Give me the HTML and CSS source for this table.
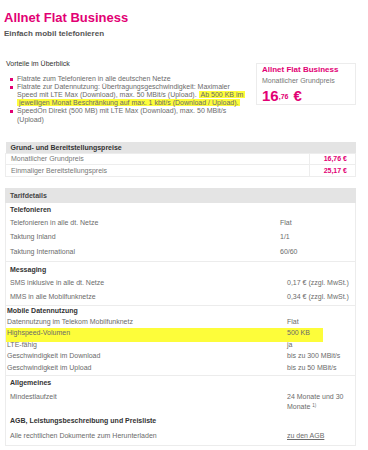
FILE: index.html
```html
<!DOCTYPE html>
<html lang="de">
<head>
<meta charset="utf-8">
<title>Allnet Flat Business</title>
<link rel="stylesheet" href="styles.css">
</head>
<body>
<div class="page">
  <h1 class="title">Allnet Flat Business</h1>
  <h2 class="subtitle">Einfach mobil telefonieren</h2>

  <div class="overview">
    <div class="benefits">
      <div class="benefits-title">Vorteile im Überblick</div>
      <ul class="benefit-list">
        <li><span>Flatrate zum Telefonieren in alle deutschen Netze</span></li>
        <li><span>Flatrate zur Datennutzung: Übertragungsgeschwindigkeit: Maximaler Speed mit LTE Max (Download), max. 50 MBit/s (Upload). <mark class="marker">Ab 500 KB im jeweiligen Monat Beschränkung auf max. 1 kbit/s (Download / Upload).</mark></span></li>
        <li><span>SpeedOn Direkt (500 MB) mit LTE Max (Download), max. 50 MBit/s (Upload)</span></li>
      </ul>
    </div>
    <div class="price-box">
      <div class="price-name">Allnet Flat Business</div>
      <div class="price-label">Monatlicher Grundpreis</div>
      <div class="price-value"><span class="big">16</span><span class="cents">,76</span><span class="big euro">€</span></div>
    </div>
  </div>

  <table class="price-table">
    <thead>
      <tr><th colspan="2">Grund- und Bereitstellungspreise</th></tr>
    </thead>
    <tbody>
      <tr><td>Monatlicher Grundpreis</td><td class="amount">16,76 €</td></tr>
      <tr><td>Einmaliger Bereitstellungspreis</td><td class="amount">25,17 €</td></tr>
    </tbody>
  </table>

  <div class="tarif">
    <div class="tarif-head">Tarifdetails</div>
    <div class="tarif-body">
      <section class="sec sec-tel">
        <div class="sec-title">Telefonieren</div>
        <div class="row"><span>Telefonieren in alle dt. Netze</span><span>Flat</span></div>
        <div class="row"><span>Taktung Inland</span><span>1/1</span></div>
        <div class="row"><span>Taktung International</span><span>60/60</span></div>
      </section>
      <section class="sec sec-msg">
        <div class="sec-title">Messaging</div>
        <div class="row"><span>SMS inklusive in alle dt. Netze</span><span>0,17 € (zzgl. MwSt.)</span></div>
        <div class="row"><span>MMS in alle Mobilfunknetze</span><span>0,34 € (zzgl. MwSt.)</span></div>
      </section>
      <section class="sec sec-data">
        <div class="sec-title">Mobile Datennutzung</div>
        <div class="row"><span>Datennutzung im Telekom Mobilfunknetz</span><span>Flat</span></div>
        <div class="row row-marked"><span>Highspeed-Volumen</span><span>500 KB</span></div>
        <div class="row"><span>LTE-fähig</span><span>ja</span></div>
        <div class="row"><span>Geschwindigkeit im Download</span><span>bis zu 300 MBit/s</span></div>
        <div class="row"><span>Geschwindigkeit im Upload</span><span>bis zu 50 MBit/s</span></div>
      </section>
      <section class="sec sec-gen">
        <div class="sec-title">Allgemeines</div>
        <div class="row row-tall"><span>Mindestlaufzeit</span><span>24 Monate und 30 Monate <sup>1)</sup></span></div>
        <div class="sec-title">AGB, Leistungsbeschreibung und Preisliste</div>
        <div class="row row-agb"><span>Alle rechtlichen Dokumente zum Herunterladen</span><a class="link" href="#">zu den AGB</a></div>
      </section>
    </div>
  </div>
</div>
</body>
</html>
```
FILE: styles.css
```css
* {
  box-sizing: border-box;
  margin: 0;
  padding: 0;
}

body {
  background: #fff;
  font-family: "Liberation Sans", Arial, sans-serif;
  font-size: 7px;
  color: #6b6b6b;
}

.page {
  width: 368px;
  padding: 10px 12px 0 5px;
}

.title {
  margin-left: -1px;
  font-size: 13px;
  line-height: 15px;
  font-weight: bold;
  color: #e20074;
}

.subtitle {
  margin-top: 4px;
  margin-left: -1px;
  font-size: 8px;
  line-height: 10px;
  font-weight: bold;
  color: #555;
}

/* Overview */
.overview {
  display: flex;
  align-items: flex-start;
  margin-top: 20px;
}

.benefits {
  width: 241px;
  padding-left: 1px;
}

.benefits-title {
  line-height: 9px;
  color: #333;
}

.benefit-list {
  list-style: none;
  margin-top: 6.6px;
}

.benefit-list li {
  display: flex;
  gap: 4px;
  padding-left: 4px;
  line-height: 8.2px;
  color: #6b6b6b;
}

.benefit-list li::before {
  content: "";
  flex: none;
  width: 3px;
  height: 3px;
  margin-top: 3px;
  background: #e20074;
}

.marker {
  background: #fdfd3a;
  color: #6b6b6b;
  padding: 0 2px;
  -webkit-box-decoration-break: clone;
  box-decoration-break: clone;
}

.price-box {
  margin-left: auto;
  margin-top: 4px;
  width: 100px;
  height: 42px;
  border: 1px solid #ececec;
  padding: 1px 5px 0;
}

.price-name {
  font-size: 8px;
  line-height: 10px;
  font-weight: bold;
  color: #e20074;
}

.price-label {
  margin-top: 1px;
  line-height: 10px;
  color: #777;
}

.price-value {
  margin-top: 2px;
  line-height: 16px;
  font-weight: bold;
  color: #e20074;
}

.price-value .big {
  font-size: 15px;
}

.price-value .euro {
  margin-left: 5px;
}

.price-value .cents {
  font-size: 7px;
  vertical-align: 2px;
}

/* Price table */
.price-table {
  width: 351px;
  margin-top: 18px;
  border-collapse: collapse;
}

.price-table th {
  height: 11px;
  padding: 0 5px;
  background: #e4e4e4;
  text-align: left;
  font-weight: bold;
  color: #333;
  line-height: 11px;
}

.price-table td {
  height: 11.5px;
  padding: 0 5px;
  border: 1px solid #ededed;
  line-height: 10px;
  color: #777;
}

.price-table td.amount {
  width: 46px;
  padding-right: 8px;
  text-align: right;
  font-weight: bold;
  color: #e20074;
}

/* Tarif details */
.tarif {
  width: 351px;
  margin-top: 11px;
}

.tarif-head {
  height: 15px;
  padding-left: 5px;
  background: #e4e4e4;
  line-height: 15px;
  font-weight: bold;
  color: #444;
}

.tarif-body {
  border: 1px solid #ececec;
  border-top: none;
}

.sec {
  padding: 0 4px;
  border-bottom: 1px solid #ececec;
}

.sec:last-child {
  border-bottom: none;
}

.sec-title {
  line-height: 12px;
  font-weight: bold;
  color: #333;
}

.row {
  display: grid;
  grid-template-columns: 1fr 64px;
  line-height: 14.5px;
}

.sec-tel {
  padding-top: 1px;
  padding-bottom: 1.5px;
}

.sec-tel .row {
  grid-template-columns: 1fr 71px;
}

.sec-msg {
  padding-top: 2px;
}

.sec-data {
  padding-left: 1px;
  padding-bottom: 1.5px;
}

.sec-data .sec-title {
  line-height: 10px;
}

.sec-data .row {
  line-height: 11.5px;
}

.row-marked {
  position: relative;
}

.row-marked::before {
  content: "";
  position: absolute;
  top: 0.5px;
  bottom: -3px;
  left: -2px;
  width: 318px;
  background: #fdfd3a;
  z-index: -1;
}

.sec-gen {
  padding-top: 1px;
}

.row-tall {
  line-height: 10px;
  padding: 3px 0;
}

.row-tall sup {
  font-size: 4.5px;
  vertical-align: top;
  line-height: 8px;
}

.row-agb {
  line-height: 10px;
  padding: 4px 0 4px;
}

.link {
  color: #6b6b6b;
  text-decoration: underline;
}
```
